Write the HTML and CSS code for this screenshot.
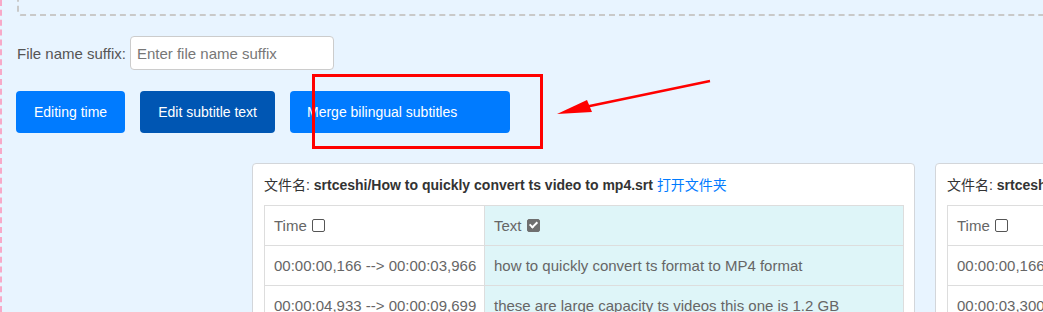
FILE: index.html
```html
<!DOCTYPE html>
<html lang="en">
<head>
    <meta charset="UTF-8">
    <meta name="viewport" content="width=device-width, initial-scale=1.0">
    <title>Subtitle tools</title>
    <link rel="stylesheet" href="styles.css">
</head>
<body>

<div class="page">
    <div class="drop-zone"></div>

    <div class="suffix-row">
        <label for="suffix">File name suffix:</label>
        <input type="text" id="suffix" class="suffix-input" placeholder="Enter file name suffix">
    </div>

    <div class="actions">
        <button class="btn">Editing time</button>
        <button class="btn btn-active">Edit subtitle text</button>
        <button class="btn btn-wide">Merge bilingual subtitles</button>
    </div>

    <div class="cards">
        <div class="card">
            <div class="card-title">文件名: <b>srtceshi/How to quickly convert ts video to mp4.srt</b> <a href="#">打开文件夹</a></div>
            <table class="subs">
                <tr>
                    <td class="col-time">Time <input type="checkbox" class="check"></td>
                    <td class="col-text">Text <input type="checkbox" class="check" checked></td>
                </tr>
                <tr>
                    <td class="col-time">00:00:00,166 --&gt; 00:00:03,966</td>
                    <td class="col-text">how to quickly convert ts format to MP4 format</td>
                </tr>
                <tr>
                    <td class="col-time">00:00:04,933 --&gt; 00:00:09,699</td>
                    <td class="col-text">these are large capacity ts videos this one is 1.2 GB</td>
                </tr>
            </table>
        </div>
        <div class="card">
            <div class="card-title">文件名: <b>srtceshi/How to quickly convert ts video to mp4.zh.srt</b> <a href="#">打开文件夹</a></div>
            <table class="subs">
                <tr>
                    <td class="col-time">Time <input type="checkbox" class="check"></td>
                    <td class="col-text">Text <input type="checkbox" class="check" checked></td>
                </tr>
                <tr>
                    <td class="col-time">00:00:00,166 --&gt; 00:00:03,966</td>
                    <td class="col-text">如何快速把ts格式转换为MP4格式</td>
                </tr>
                <tr>
                    <td class="col-time">00:00:03,300 --&gt; 00:00:09,699</td>
                    <td class="col-text">这些是大容量的ts视频</td>
                </tr>
            </table>
        </div>
    </div>

    <svg class="markup" width="1043" height="312" viewBox="0 0 1043 312">
        <rect x="313.5" y="75.5" width="228" height="72" fill="none" stroke="#ff0000" stroke-width="3"/>
        <line x1="710" y1="81" x2="585" y2="107" stroke="#ff0000" stroke-width="2.5"/>
        <polygon points="557,114 587,100 592,112" fill="#ff0000"/>
    </svg>
</div>

</body>
</html>
```

FILE: styles.css
```css
body {
    margin: 0;
    padding: 0;
    font-family: 'Liberation Sans', Arial, 'Noto Sans CJK SC', sans-serif;
    background-color: #e8f4ff;
    overflow: hidden;
    width: 1043px;
    height: 312px;
}

.page {
    display: flow-root;
    position: relative;
    height: 312px;
    border-left: 2px dashed #f7a9c8;
    padding-left: 15px;
    box-sizing: border-box;
}

.drop-zone {
    height: 60px;
    margin-top: -48px;
    margin-right: -40px;
    border: 2px dashed #c9c9c9;
    border-radius: 4px;
}

.suffix-row {
    display: flex;
    align-items: center;
    gap: 4px;
    margin-top: 20px;
    font-size: 15px;
    color: #555;
}

.suffix-input {
    width: 204px;
    height: 34px;
    box-sizing: border-box;
    border: 1px solid #ccc;
    border-radius: 4px;
    padding: 0 6px;
    font-family: inherit;
    font-size: 15px;
    color: #333;
    background: #fff;
}

.suffix-input::placeholder {
    color: #777;
}

.actions {
    display: flex;
    gap: 15px;
    margin-top: 21px;
    margin-left: -1px;
}

.btn {
    height: 42px;
    padding: 0 18px;
    border: none;
    border-radius: 4px;
    background-color: #007bff;
    color: #fff;
    font-family: inherit;
    font-size: 14px;
    cursor: pointer;
}

.btn-active {
    background-color: #0056b3;
}

.btn-wide {
    width: 220px;
    text-align: left;
    padding-left: 17px;
}

.cards {
    display: flex;
    gap: 20px;
    margin-top: 30px;
    padding-left: 235px;
}

.card {
    flex-shrink: 0;
    width: 663px;
    box-sizing: border-box;
    padding: 11px;
    background-color: #fff;
    border: 1px solid #d3d6da;
    border-radius: 4px;
}

.card-title {
    font-size: 14px;
    line-height: 20px;
    color: #333;
    margin-bottom: 10px;
    white-space: nowrap;
}

.card-title a {
    color: #007bff;
    text-decoration: none;
}

.subs {
    width: 640px;
    table-layout: fixed;
    border-collapse: collapse;
    font-size: 15px;
    color: #666;
}

.subs td {
    height: 39px;
    padding: 0 6px 0 9px;
    border: 1px solid #ddd;
    white-space: nowrap;
    overflow: hidden;
}

.subs .col-time {
    width: 204px;
}

.subs .col-text {
    background-color: #def5f8;
}

.check {
    appearance: none;
    width: 13px;
    height: 13px;
    margin: 0 0 0 1px;
    vertical-align: -1px;
    border: 1px solid #555;
    border-radius: 2px;
    background: #fff;
    box-sizing: border-box;
    position: relative;
}

.check:checked {
    background: #6f6f6f;
    border-color: #6f6f6f;
}

.check:checked::after {
    content: '';
    position: absolute;
    left: 3px;
    top: 0px;
    width: 3px;
    height: 6px;
    border: solid #fff;
    border-width: 0 2px 2px 0;
    transform: rotate(45deg);
}

.markup {
    position: absolute;
    top: 0;
    left: -2px;
    pointer-events: none;
}
```
